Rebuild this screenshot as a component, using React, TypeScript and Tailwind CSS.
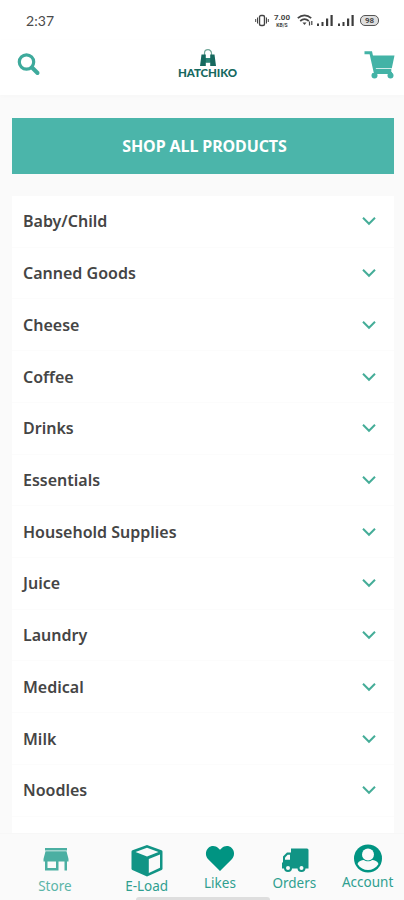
import type { ReactNode } from "react";

const categories = [
  "Baby/Child",
  "Canned Goods",
  "Cheese",
  "Coffee",
  "Drinks",
  "Essentials",
  "Household Supplies",
  "Juice",
  "Laundry",
  "Medical",
  "Milk",
  "Noodles",
];

function SignalIcon() {
  return (
    <svg width="16" height="13" viewBox="0 0 16 13" fill="#3c3c3c">
      <rect x="0" y="9.5" width="2" height="2.5" />
      <rect x="4.5" y="8" width="2" height="4" />
      <rect x="9" y="4.5" width="2.2" height="7.5" />
      <rect x="13.5" y="1" width="2.2" height="11" />
    </svg>
  );
}

function StatusBar() {
  return (
    <div className="flex h-10 items-center pl-[26px] pr-[25px] pt-px text-[#4a4a4a]">
      <span className="flex-1 font-['Lato'] text-[14px] tracking-[0.1px]">
        2:37
      </span>
      <svg width="14" height="13" viewBox="0 0 14 13" fill="none" stroke="#444">
        <rect x="4.5" y="1.5" width="5" height="10" rx="1.5" strokeWidth="1.4" />
        <path d="M2.5 3.5v6M11.5 3.5v6M.7 5v3M13.3 5v3" />
      </svg>
      <div className="ml-[4px] flex w-[18px] flex-col items-center whitespace-nowrap font-['Roboto'] font-bold text-[#444]">
        <span className="h-[8px] text-[8px] leading-[8px]">7.00</span>
        <span className="h-[6px] text-[5px] leading-[6px]">KB/S</span>
      </div>
      <svg className="ml-[6px]" width="16" height="13" viewBox="0 0 16 13" fill="none" stroke="#444" strokeWidth="1.7">
        <path d="M.8 4.2c4-3.8 9.4-3.8 13.4 0M3.2 7c2.7-2.4 5.9-2.4 8.6 0" />
        <path d="M5.5 8.6h4L7.5 11z" fill="#444" stroke="none" />
        <path d="M12.5 7.5v4M14.8 7v4" strokeWidth="1.2" />
      </svg>
      <div className="ml-1 flex gap-[5px]">
        <SignalIcon />
        <SignalIcon />
      </div>
      <div className="ml-[6px] flex h-[11px] w-[19px] items-center justify-center rounded-[5px] border-[1.5px] border-[#555] bg-[#dedede] font-['Roboto'] text-[8px] font-bold leading-none">
        98
      </div>
    </div>
  );
}

function Logo() {
  return (
    <div className="flex w-[60px] flex-col items-center text-[#16695f]">
      <svg width="18" height="18" viewBox="0 0 18 18">
        <path d="M5.5 6V4.2a3.5 3.5 0 0 1 7 0V6" fill="none" stroke="#6fa597" strokeWidth="1.2" />
        <path d="M2.5 5.5h4.3V9h4.4V5.5h4.3L17 17h-5.8v-3.5H6.8V17H1z" fill="#16695f" />
        <path d="M6.8 9h4.4v4.5H6.8z" fill="#2b8577" />
      </svg>
      <span className="whitespace-nowrap font-['Lato'] text-[11.5px] font-black leading-[11px] tracking-[-0.1px]">
        HATCHIKO
      </span>
    </div>
  );
}

function Header() {
  return (
    <header className="flex h-[55px] items-start justify-between bg-white pl-[17px] pr-[8px] shadow-[0_1px_5px_rgba(0,0,0,0.02)]">
      <svg className="mt-3" width="24" height="24" viewBox="0 0 24 24" fill="none" stroke="#3eaa9c">
        <circle cx="9.5" cy="10" r="7.2" strokeWidth="3.2" />
        <path d="M15 15.5l5.5 5.5" strokeWidth="4" strokeLinecap="round" />
      </svg>
      <div className="ml-[10px] mt-[9px]">
        <Logo />
      </div>
      <svg className="mt-[11px]" width="32" height="28" viewBox="0 0 32 28">
        <path d="M.5 1.7h6.3l4 17.8h16.5" fill="none" stroke="#43b3a6" strokeWidth="3" />
        <path d="M7.5 4.5h23l-2.7 12.8H10.6z" fill="#43b3a6" />
        <path d="M11 18v4h17" fill="none" stroke="#43b3a6" strokeWidth="2" />
        <circle cx="10.5" cy="24.5" r="3" fill="#43b3a6" />
        <circle cx="26.5" cy="24.5" r="3" fill="#43b3a6" />
      </svg>
    </header>
  );
}

function CategoryRow({ name }: { name: string }) {
  return (
    <li className="flex h-[51.73px] items-center justify-between border-b border-[#fcfcfc] pl-[11px] pr-[18px]">
      <span className="text-base font-semibold text-[#454545]">{name}</span>
      <svg width="14" height="10" viewBox="0 0 14 10" fill="none" stroke="#45ad98" strokeWidth="2">
        <path d="M1 1.8l6 6 6-6" />
      </svg>
    </li>
  );
}

interface NavItemProps {
  icon: ReactNode;
  label: string;
  className: string;
}

function NavItem({ icon, label, className }: NavItemProps) {
  return (
    <div className={`flex flex-col items-center ${className}`}>
      {icon}
      <span className="mt-px whitespace-nowrap text-[13.5px] leading-4">
        {label}
      </span>
    </div>
  );
}

function BottomNav() {
  return (
    <nav className="relative flex h-[67px] shrink-0 border-t border-[#f7f7f7] bg-[#fafafa] text-[#2f9f90]">
      <NavItem
        className="ml-[18px] w-[74px] pt-[11px] text-[#5bb5a8]"
        label="Store"
        icon={
          <svg className="mb-[4px] ml-0.5" width="28" height="28" viewBox="0 0 28 28" fill="#4bafa2">
            <rect x="3" y="3" width="22" height="2.5" />
            <path d="M3.5 6.3h21l2 7.7v2.5h-25V14z" />
            <path d="M3 16h2.5v7H14v-7h2.5v9.5H3zM22.5 16H25v9.5h-2.5z" />
          </svg>
        }
      />
      <NavItem
        className="w-[110px] pt-[10px]"
        label="E-Load"
        icon={
          <svg width="34" height="33" viewBox="0 0 34 33">
            <path d="M17 1l14.5 5.2q1 .4 1 1.5v16.8q0 1-.9 1.5L17 32.5 2.4 26q-.9-.5-.9-1.5V7.7q0-1.1 1-1.5z" fill="#119485" />
            <path d="M17 3.8l11.5 4.1L17 12.5 5.5 7.9zM18.8 15l11.2-4.5v13.3l-11.2 5.3z" fill="#fafafa" />
          </svg>
        }
      />
      <NavItem
        className="w-[37px] pt-[11px]"
        label="Likes"
        icon={
          <svg className="mb-[2px] ml-px" width="30" height="27" viewBox="0 0 30 27" fill="#009482">
            <path d="M15 26L3.2 14.2C.2 11.2.2 6 3.3 3c3-3 7.5-2.4 10.1.2L15 4.8l1.6-1.6C19.2.6 23.7 0 26.7 3c3.1 3 3.1 8.2.1 11.2z" />
          </svg>
        }
      />
      <NavItem
        className="ml-[19px] w-[74px] pt-[13px]"
        label="Orders"
        icon={
          <svg className="mb-px ml-[2px]" width="28" height="26" viewBox="0 0 28 26">
            <path d="M10 1.5H26q1.5 0 1.5 1.5V21.5H1v-5.5l1-1V9.5L6 5.5h4z" fill="#119485" />
            <path d="M9 7.7H6.7L4 10.4v2.4h5z" fill="#fafafa" />
            <circle cx="7" cy="21" r="3" fill="#fafafa" stroke="#119485" strokeWidth="2" />
            <circle cx="20.5" cy="21" r="3" fill="#fafafa" stroke="#119485" strokeWidth="2" />
          </svg>
        }
      />
      <NavItem
        className="w-[73px] pt-[10px]"
        label="Account"
        icon={
          <svg className="ml-px" width="30" height="29" viewBox="0 0 30 29">
            <circle cx="15" cy="14.5" r="14" fill="#009482" />
            <circle cx="15" cy="10.5" r="6" fill="#fafafa" />
            <path d="M4.5 20c1-3 4-4 6.3-4 2.2 1.7 6.2 1.7 8.4 0 2.3 0 5.3 1 6.3 4-5 8-16 8-21 0z" fill="#fafafa" />
          </svg>
        }
      />
      {/* home gesture bar */}
      <div className="absolute bottom-0 left-[136px] h-[3px] w-[134px] rounded-t bg-[#dedede]" />
    </nav>
  );
}

export default function App() {
  return (
    <div className="flex h-[900px] w-[404px] flex-col overflow-hidden bg-[#fafafa] font-['Noto_Sans',sans-serif]">
      <div className="shrink-0 bg-white">
        <StatusBar />
        <Header />
      </div>
      <main className="min-h-0 flex-1 overflow-hidden pl-3 pr-[10px] pt-[23px]">
        <button className="block h-[56px] w-full bg-[#4bb5aa] pb-px pl-[3px] text-base font-bold tracking-[-0.1px] text-white">
          SHOP ALL PRODUCTS
        </button>
        <ul className="mt-[22px] h-[640px] bg-white">
          {categories.map((name) => (
            <CategoryRow key={name} name={name} />
          ))}
        </ul>
      </main>
      <BottomNav />
    </div>
  );
}
